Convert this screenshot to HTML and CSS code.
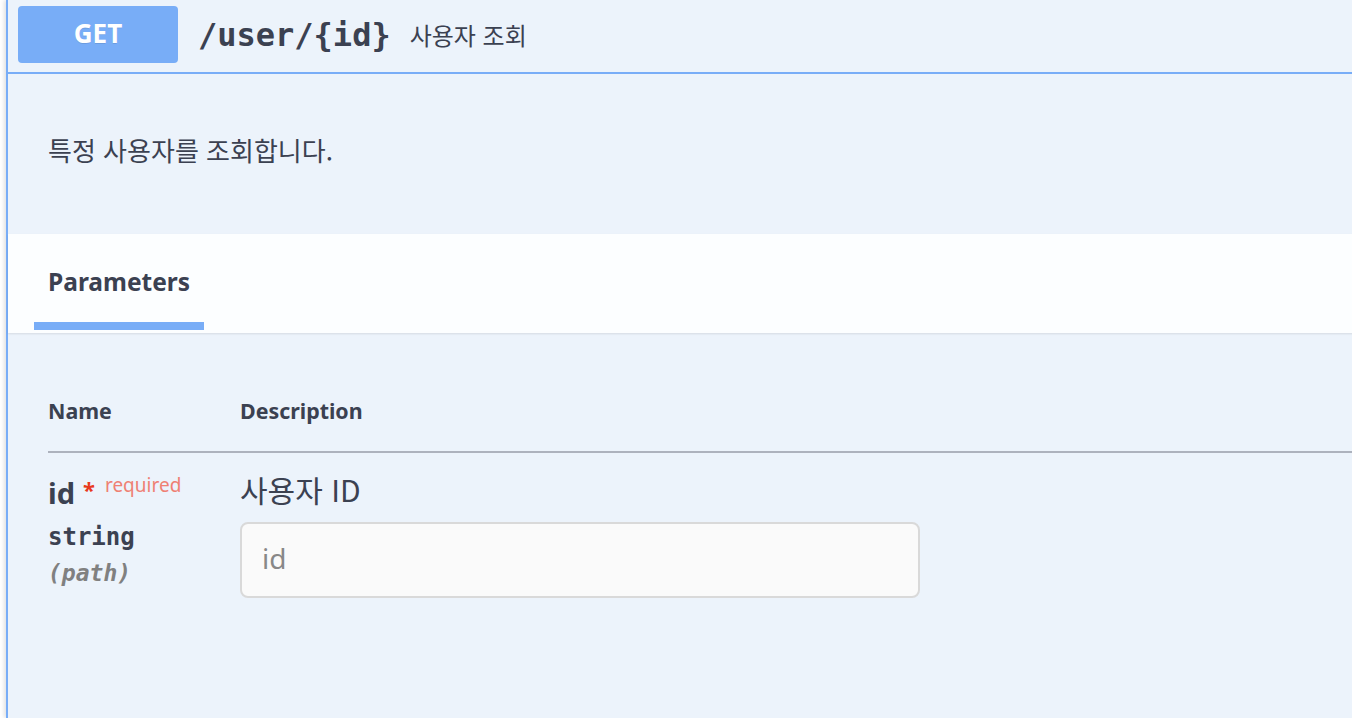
FILE: index.html
```html
<!DOCTYPE html>
<html lang="ko">
<head>
  <meta charset="UTF-8">
  <meta name="viewport" content="width=device-width, initial-scale=1.0">
  <title>Swagger UI - user</title>
  <link rel="stylesheet" href="styles.css">
</head>
<body>

  <div class="opblock opblock-get">
    <!-- summary row -->
    <div class="opblock-summary">
      <span class="summary-method">GET</span>
      <span class="summary-path">/user/{id}</span>
      <span class="summary-desc">사용자 조회</span>
    </div>

    <div class="opblock-body">
      <div class="opblock-description">
        <p>특정 사용자를 조회합니다.</p>
      </div>

      <div class="section-header">
        <h4 class="tab-item">Parameters</h4>
      </div>

      <div class="parameters-container">
        <table class="parameters">
          <thead>
            <tr>
              <th class="col-name">Name</th>
              <th class="col-desc">Description</th>
            </tr>
          </thead>
          <tbody>
            <tr>
              <td class="col-name">
                <div class="param-name">id<span class="required-star">*</span><span class="required-label">required</span></div>
                <div class="param-type">string</div>
                <div class="param-in">(path)</div>
              </td>
              <td class="col-desc">
                <div class="param-desc">사용자 ID</div>
                <input type="text" class="param-input" placeholder="id">
              </td>
            </tr>
          </tbody>
        </table>
      </div>
    </div>
  </div>

</body>
</html>
```

FILE: styles.css
```css
body {
  margin: 0;
  padding: 0;
  background-color: #ffffff;
  font-family: 'Noto Sans', 'Noto Sans CJK KR', sans-serif;
  color: #3b4151;
  overflow: hidden;
}

.opblock {
  margin-left: 6px;
  width: 1400px;
  height: 718px;
  background-color: #ecf3fb;
  border-left: 2px solid #78adf7;
  box-shadow: -2px 0 4px rgba(0, 0, 0, 0.12);
}

.opblock-summary {
  display: flex;
  align-items: center;
  box-sizing: border-box;
  height: 74px;
  padding: 0 10px 3px;
  border-bottom: 2px solid #78adf7;
}

.summary-method {
  display: inline-block;
  width: 160px;
  height: 57px;
  line-height: 55px;
  text-align: center;
  background-color: #78adf7;
  color: #fff;
  border-radius: 4px;
  font-size: 26px;
  font-weight: bold;
  text-shadow: 0 1px 0 rgba(0, 0, 0, 0.1);
}

.summary-path {
  margin-left: 20px;
  font-family: 'DejaVu Sans Mono', 'Liberation Mono', monospace;
  font-weight: bold;
  font-size: 32px;
}

.summary-desc {
  margin-left: 19px;
  font-family: 'Noto Sans CJK KR', sans-serif;
  font-size: 24px;
}

.opblock-description {
  padding: 58px 40px 66px;
}

.opblock-description p {
  margin: 0;
  font-family: 'Noto Sans CJK KR', sans-serif;
  font-size: 26px;
  line-height: 36px;
}

.section-header {
  padding: 0 26px 3px;
  background-color: rgba(255, 255, 255, 0.85);
  box-shadow: 0 1px 2px rgba(0, 0, 0, 0.1);
}

.tab-item {
  display: inline-block;
  margin: 0;
  padding: 32px 14px 24px;
  line-height: 32px;
  font-size: 24.5px;
  font-weight: bold;
  border-bottom: 8px solid #78adf7;
}

.parameters-container {
  padding: 64px 0 0 40px;
}

.parameters {
  width: 100%;
  border-collapse: collapse;
}

.parameters th {
  text-align: left;
  font-size: 21.4px;
  font-weight: bold;
  line-height: 28px;
  padding: 0 0 26px;
  border-bottom: 2px solid #adb2bd;
}

.parameters td {
  vertical-align: top;
  padding: 22px 0 0;
}

.col-name {
  width: 192px;
}

.param-name {
  font-size: 29px;
  font-weight: bold;
  line-height: 36px;
}

.required-star {
  color: #e8391c;
  font-size: 22px;
  margin-left: 8px;
  position: relative;
  top: -6px;
}

.required-label {
  color: #ef8073;
  font-size: 19px;
  font-weight: normal;
  margin-left: 10px;
  position: relative;
  top: -12px;
}

.param-type {
  margin-top: 6px;
  font-family: 'DejaVu Sans Mono', 'Liberation Mono', monospace;
  font-weight: bold;
  font-size: 24px;
  line-height: 32px;
}

.param-in {
  margin-top: 4px;
  font-family: 'DejaVu Sans Mono', 'Liberation Mono', monospace;
  font-weight: bold;
  font-style: italic;
  font-size: 23px;
  line-height: 32px;
  color: #808080;
}

.param-desc {
  font-family: 'Noto Sans CJK KR', sans-serif;
  font-size: 30px;
  line-height: 36px;
  margin-top: -4px;
}

.param-input {
  display: block;
  margin-top: 15px;
  width: 680px;
  height: 76px;
  box-sizing: border-box;
  padding: 0 20px 4px;
  background-color: #fafafa;
  border: 2px solid #d9d9d9;
  border-radius: 8px;
  font-family: 'Noto Sans', sans-serif;
  font-size: 28px;
  color: #3b4151;
}

.param-input::placeholder {
  color: #888;
}
```
